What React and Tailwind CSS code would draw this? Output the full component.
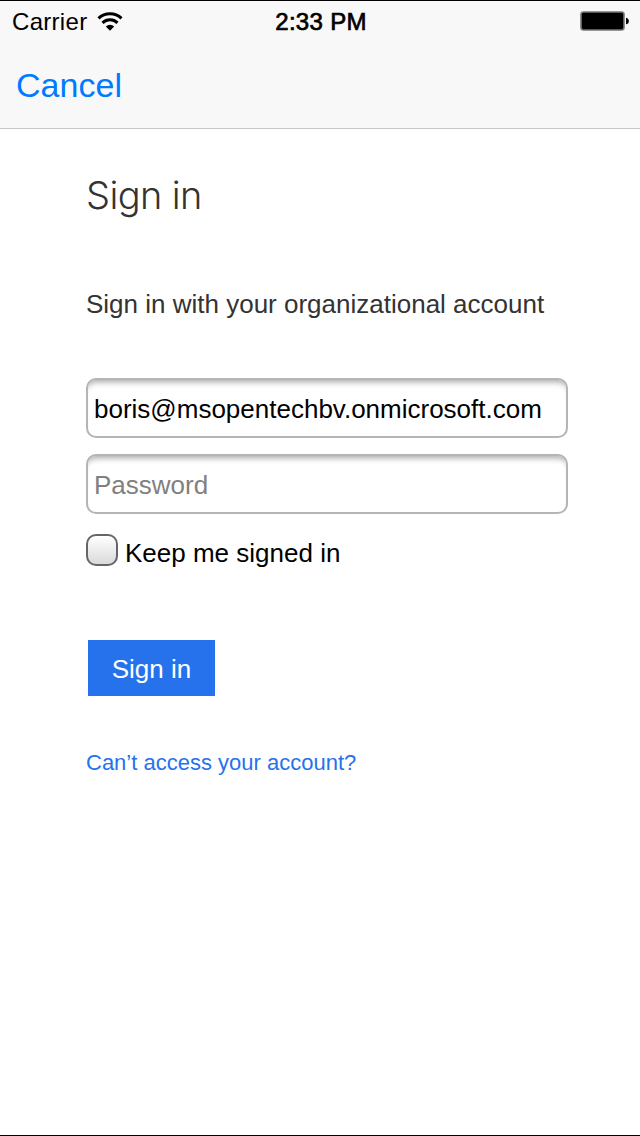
function WifiIcon() {
  return (
    <svg className="-mt-[2px] ml-[10px] h-[19px] w-[26px]" viewBox="0 0 26 19" fill="none" stroke="black">
      <path d="M1.5 6.4a16.6 16.6 0 0 1 23 0" strokeWidth="3.1" />
      <path d="M5.5 10.8a10.9 10.9 0 0 1 15 0" strokeWidth="3" />
      <path d="M8.8 14.4a6.2 6.2 0 0 1 8.4 0L13 18.7z" fill="black" stroke="none" />
    </svg>
  );
}

function BatteryIcon() {
  return (
    <svg className="-mt-[2px] h-[20px] w-[50px]" viewBox="0 0 50 20">
      <rect x="1" y="1" width="43" height="18" rx="2.5" fill="black" stroke="#777" strokeWidth="1.6" />
      <path d="M46 6.7c3.8.5 3.8 6.1 0 6.6z" fill="black" />
    </svg>
  );
}

const fieldClass =
  "block h-[60px] w-full rounded-[10px] border-2 border-[#b5b5b5] bg-white pt-[2px] pl-[6px] text-[26px] leading-[30px] text-black shadow-[inset_0_7px_6px_-5px_rgba(0,0,0,0.35)] outline-none placeholder:text-[#808080] placeholder:opacity-100";

export default function App() {
  return (
    <div className="flex h-[1136px] w-[640px] flex-col overflow-hidden border-y border-black bg-white font-['Liberation_Sans',Arial,sans-serif] text-black">
      <header className="h-[128px] shrink-0 border-b border-[#c8c8c8] bg-[#f8f8f8]">
        <div className="grid h-[42px] grid-cols-[1fr_auto_1fr] items-center pr-[10px] pl-[12px] text-[24px] leading-[28px]">
          <div className="flex items-center">
            <span className="tracking-[0.3px]">Carrier</span>
            <WifiIcon />
          </div>
          <time className="tracking-[0.3px] [-webkit-text-stroke:0.7px_black]">2:33 PM</time>
          <div className="flex justify-end">
            <BatteryIcon />
          </div>
        </div>
        <button className="mt-[22px] ml-[16px] block text-[34px] leading-[40px] tracking-[0.05px] text-[#007aff]">
          Cancel
        </button>
      </header>
      <main className="flex flex-col items-start pt-[42px] pr-[72px] pl-[86px]">
        <h1 className="font-[Inter,sans-serif] text-[38px] leading-[48px] font-light tracking-[-0.6px] text-[#333]">Sign in</h1>
        <p className="mt-[70px] text-[26px] leading-[30px] whitespace-nowrap text-[#333]">
          Sign in with your organizational account
        </p>
        <form className="mt-[59px] flex w-full flex-col items-start">
          <input className={fieldClass} type="text" defaultValue="boris@msopentechbv.onmicrosoft.com" />
          <input className={`${fieldClass} mt-4`} type="password" placeholder="Password" />
          <label className="mt-[20px] flex text-[26px] leading-[38px]">
            <input
              type="checkbox"
              className="mr-[7px] size-8 appearance-none rounded-[10px] border-2 border-[#666] bg-linear-to-b from-white to-[#dadada]"
            />
            Keep me signed in
          </label>
          <button type="button" className="mt-[68px] ml-[2px] h-[56px] w-[127px] bg-[#2672ec] pt-[2px] text-[26px] text-white">
            Sign in
          </button>
        </form>
        <a href="#" className="mt-[54px] text-[22px] leading-[26px] whitespace-nowrap text-[#2672ec]">
          Can’t access your account?
        </a>
      </main>
    </div>
  );
}
